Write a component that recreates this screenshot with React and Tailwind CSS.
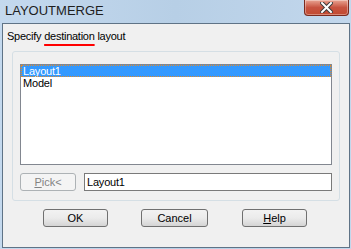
const font = { fontFamily: '"Liberation Sans", Arial, sans-serif' };

const Button = ({ children, className = '' }) => (
  <button
    className={`h-[18px] w-[65px] rounded-[3px] border border-[#707070] bg-gradient-to-b from-[#f2f2f2] via-[#ebebeb] to-[#d4d4d4] text-[11px] leading-none text-black ${className}`}
  >
    {children}
  </button>
);

const CloseButton = () => (
  <div className="flex h-[16px] w-[45px] items-center justify-center rounded-b-[4px] border border-t-0 border-[#7a2a1e] bg-gradient-to-b from-[#e8a493] via-[#c75340] to-[#c24a30] shadow-[inset_0_0_0_1px_rgba(255,255,255,0.35)]">
    <svg width="13" height="11" viewBox="0 0 13 11">
      <path d="M2 1 L11 10 M11 1 L2 10" stroke="#3b3b3b" strokeWidth="4" strokeLinecap="square" />
      <path d="M2 1 L11 10 M11 1 L2 10" stroke="#ffffff" strokeWidth="2" strokeLinecap="square" />
    </svg>
  </div>
);

export default function App() {
  return (
    <div
      className="flex h-[249px] w-[351px] flex-col bg-gradient-to-r from-[#c4d9ee] via-[#b7cfe6] to-[#c2d7ec] pb-[1px] pl-[2px] pr-[1px]"
      style={font}
    >
      <div className="flex h-[23px] shrink-0 items-start justify-between">
        <span className="pl-[3px] pt-[3px] text-[13px] leading-[16px] text-[#1e1e1e]">LAYOUTMERGE</span>
        <div className="mr-[1px]">
          <CloseButton />
        </div>
      </div>

      <div className="flex flex-1 flex-col border border-[#5f7386] bg-[#f0f0f0]">
        <div className="pl-[4px] pt-[6px] text-[11px] leading-[13px] tracking-[-0.25px] text-black">
          Specify{' '}
          <span className="underline decoration-[#ff0000] decoration-2 underline-offset-[4px]">destination</span>{' '}
          layout
        </div>

        <div className="ml-[9px] mt-[8px] flex h-[150px] w-[328px] flex-col rounded-[3px] border border-[#d5dfe5] px-[7px] pt-[12px]">
          <div className="h-[101px] border border-[#828790] bg-white text-[11px] leading-[12px] tracking-[-0.2px]">
            <div className="bg-[#3399ff] pl-[2px] text-white outline-1 outline-dotted outline-offset-[-1px] outline-[#e08a2a]">
              Layout1
            </div>
            <div className="pl-[2px] text-black">Model</div>
          </div>

          <div className="mt-[8px] flex items-center gap-[8px]">
            <button className="h-[18px] w-[56px] rounded-[3px] border border-[#adb2b5] bg-[#f4f4f4] text-[11px] leading-none text-[#838383]">
              <span className="underline">P</span>ick&lt;
            </button>
            <div className="flex h-[18px] flex-1 items-center border border-[#7a7a7a] bg-white pl-[2px] text-[11px] tracking-[-0.2px] text-black">
              Layout1
            </div>
          </div>
        </div>

        <div className="mt-[8px] flex pl-[40px]">
          <Button>OK</Button>
          <Button className="ml-[33px] w-[67px]">Cancel</Button>
          <Button className="ml-[34px]">
            <span className="underline">H</span>elp
          </Button>
        </div>
      </div>
    </div>
  );
}
